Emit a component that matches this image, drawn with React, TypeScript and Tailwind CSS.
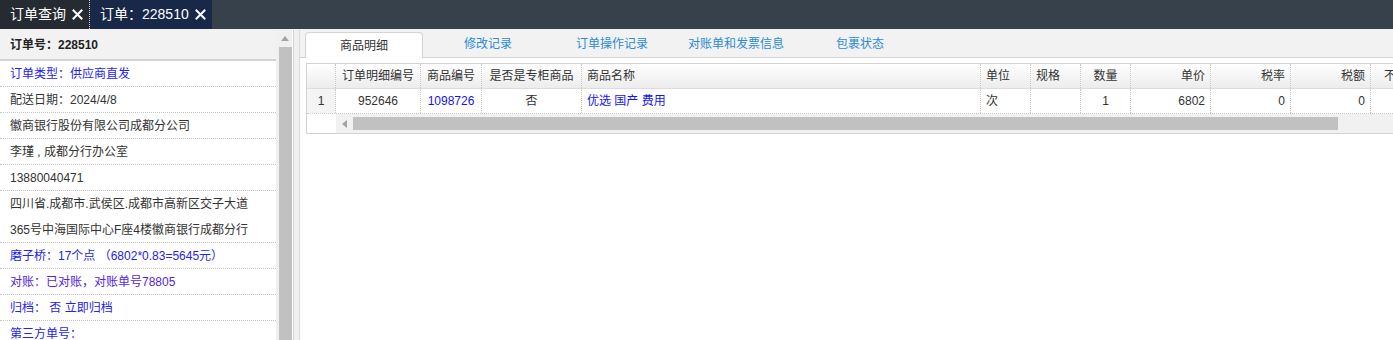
const font = '[font-family:"Liberation_Sans","Noto_Sans_CJK_SC",sans-serif]'

type Col = { title: string; w: string; align: 'left' | 'center' | 'right' | 'wide' }

const cols: Col[] = [
  { title: '订单明细编号', w: 'w-[85px]', align: 'center' },
  { title: '商品编号', w: 'w-[61px]', align: 'center' },
  { title: '是否是专柜商品', w: 'w-[100px]', align: 'center' },
  { title: '商品名称', w: 'w-[399px]', align: 'left' },
  { title: '单位', w: 'w-[50px]', align: 'left' },
  { title: '规格', w: 'w-[50px]', align: 'left' },
  { title: '数量', w: 'w-[50px]', align: 'center' },
  { title: '单价', w: 'w-[80px]', align: 'right' },
  { title: '税率', w: 'w-[80px]', align: 'right' },
  { title: '税额', w: 'w-[80px]', align: 'right' },
  { title: '不含税金额', w: 'w-[90px]', align: 'wide' },
]

const row: { text: string; blue?: boolean }[] = [
  { text: '952646' },
  { text: '1098726', blue: true },
  { text: '否' },
  { text: '优选 国产 费用', blue: true },
  { text: '次' },
  { text: '' },
  { text: '1' },
  { text: '6802' },
  { text: '0' },
  { text: '0' },
  { text: '' },
]

const alignCls = {
  left: 'justify-start pl-[5px]',
  center: 'justify-center',
  right: 'justify-end pr-[5px]',
  wide: 'justify-start pl-[13px]',
}

const infoRows: { text: string; color?: string; h?: string }[] = [
  { text: '订单类型：供应商直发', color: 'text-[#2323f0]' },
  { text: '配送日期：2024/4/8' },
  { text: '徽商银行股份有限公司成都分公司' },
  { text: '李瑾 , 成都分行办公室' },
  { text: '13880040471' },
  { text: '四川省.成都市.武侯区.成都市高新区交子大道365号中海国际中心F座4楼徽商银行成都分行', h: 'h-[52px]' },
  { text: '磨子桥：17个点 （6802*0.83=5645元）', color: 'text-[#2323f0]' },
  { text: '对账：已对账，对账单号78805', color: 'text-[#5326e6]' },
  { text: '归档： 否 立即归档', color: 'text-[#2323f0]' },
  { text: '第三方单号：', color: 'text-[#2323f0]' },
]

const tabs = ['商品明细', '修改记录', '订单操作记录', '对账单和发票信息', '包裹状态']

function CloseX() {
  return (
    <svg width="11" height="11" viewBox="0 0 11 11" className="ml-[6px]">
      <path d="M1.5 1.5 L9.5 9.5 M9.5 1.5 L1.5 9.5" stroke="#fff" strokeWidth="2" strokeLinecap="square" />
    </svg>
  )
}

export default function App() {
  return (
    <div className={`w-[1393px] h-[340px] overflow-hidden bg-white text-[#333] ${font}`}>
      {/* top tab strip */}
      <div className="h-[29px] bg-[#37414b] flex text-white text-[14px]">
        <div className="flex items-center pl-[10px] pr-[6px] bg-[#262b31] border-r border-dotted border-[#cfd3d8]">
          订单查询
          <CloseX />
        </div>
        <div className="flex items-center pl-[10px] pr-[6px] bg-[#172849]">
          订单：228510
          <CloseX />
        </div>
      </div>

      <div className="flex h-[311px] bg-[#f0f0f0] pt-[1px]">
        {/* left info panel */}
        <div className="w-[276px] bg-white flex flex-col text-[12px]">
          <div className="h-[31px] shrink-0 bg-[#f2f2f2] border-b-2 border-[#d3d3d3] flex items-center px-[10px] font-bold text-[#222]">
            订单号：228510
          </div>
          {infoRows.map((r, i) => (
            <div
              key={i}
              className={`${r.h ?? 'h-[26px]'} shrink-0 px-[10px] leading-[26px] border-b border-dotted border-[#c4c4c4] ${r.color ?? 'text-[#333]'}`}
            >
              {r.text}
            </div>
          ))}
        </div>

        {/* left scrollbar */}
        <div className="w-[16px] bg-[#f0f0f0] flex flex-col items-center pl-[2px]">
          <div className="h-[17px] flex items-center justify-center w-full">
            <svg width="8" height="5" viewBox="0 0 8 5">
              <path d="M0 5 L4 0 L8 5 Z" fill="#a3a3a3" />
            </svg>
          </div>
          <div className="flex-1 w-[13px] bg-[#c1c1c1]" />
        </div>

        {/* splitter */}
        <div className="w-[7px] flex">
          <div className="w-[1px] bg-white" />
          <div className="w-[1px] bg-[#d4d4d4]" />
          <div className="flex-1 bg-[#f0f0f0]" />
        </div>

        {/* right panel */}
        <div className="flex-1 bg-white border-l border-[#dcdcdc] flex flex-col min-w-0 overflow-hidden">
          <div className="h-[28px] shrink-0 bg-[#f2f2f2] border-b border-[#d3d3d3] flex items-end pl-[5px] gap-[6px] text-[12px]">
            {tabs.map((t, i) =>
              i === 0 ? (
                <div
                  key={t}
                  className="w-[118px] h-[26px] -mb-px bg-white border border-b-0 border-[#d3d3d3] rounded-t-[4px] flex items-center justify-center text-[#333]"
                >
                  {t}
                </div>
              ) : (
                <div key={t} className="w-[118px] h-[26px] flex items-center justify-center text-[#2b8bd6]">
                  {t}
                </div>
              ),
            )}
          </div>

          {/* grid */}
          <div className="mt-[5px] ml-[6px] border border-[#d3d3d3] text-[12px] w-max">
            <div className="flex h-[25px] bg-gradient-to-b from-white to-[#ececec] border-b border-[#dcdcdc]">
              <div className="w-[29px] border-r border-dotted border-[#c8c8c8]" />
              {cols.map(c => (
                <div
                  key={c.title}
                  className={`${c.w} flex items-center border-r border-dotted border-[#c8c8c8] text-[#333] whitespace-nowrap overflow-hidden ${alignCls[c.align]}`}
                >
                  {c.title}
                </div>
              ))}
            </div>
            <div className="flex h-[25px] border-b border-dotted border-[#c8c8c8]">
              <div className="w-[29px] bg-[#f4f4f4] border-r border-dotted border-[#c8c8c8] flex items-center justify-center">
                1
              </div>
              {cols.map((c, i) => (
                <div
                  key={c.title}
                  className={`${c.w} flex items-center border-r border-dotted border-[#c8c8c8] whitespace-nowrap ${alignCls[c.align]} ${row[i].blue ? 'text-[#1414f0]' : 'text-[#333]'}`}
                >
                  {row[i].text}
                </div>
              ))}
            </div>
            <div className="flex h-[19px]">
              <div className="w-[29px] bg-white" />
              <div className="flex-1 bg-[#f1f1f1] flex items-center">
                <div className="w-[17px] flex items-center justify-center">
                  <svg width="5" height="8" viewBox="0 0 5 8">
                    <path d="M5 0 L0 4 L5 8 Z" fill="#a3a3a3" />
                  </svg>
                </div>
                <div className="w-[985px] h-[13px] bg-[#c1c1c1]" />
              </div>
            </div>
          </div>
        </div>
      </div>
    </div>
  )
}
